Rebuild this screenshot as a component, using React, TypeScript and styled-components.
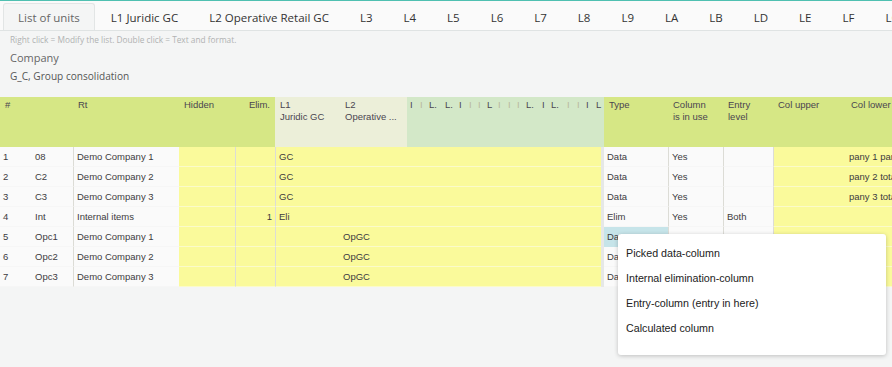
import React from "react";
import styled, { createGlobalStyle } from "styled-components";

const GlobalStyle = createGlobalStyle`
  html, body { margin: 0; padding: 0; }
  body {
    background: #f4f5f5;
    font-family: "Liberation Sans", Arial, sans-serif;
    overflow: hidden;
  }
`;

const Page = styled.div`
  position: relative;
  width: 892px;
  height: 367px;
  background: #f4f5f5;
  overflow: hidden;
`;

const TabBar = styled.div`
  display: flex;
  align-items: flex-end;
  gap: 1px;
  height: 29px;
  padding-left: 3px;
  background: #fafafa;
  border-top: 1px solid #4fc0b1;
  border-bottom: 1px solid #dfe3e3;
  white-space: nowrap;
  overflow: hidden;
`;

const Tab = styled.div<{ $active?: boolean }>`
  flex: none;
  height: 27px;
  line-height: 27px;
  padding: 0 14px;
  margin-bottom: -1px;
  font-family: "Open Sans", sans-serif;
  font-size: 11.5px;
  color: ${(p) => (p.$active ? "#666" : "#333")};
  background: ${(p) => (p.$active ? "#f4f5f5" : "transparent")};
  border: 1px solid ${(p) => (p.$active ? "#e2e5e5" : "transparent")};
  border-bottom: none;
  border-radius: 3px 3px 0 0;
  box-sizing: content-box;
`;

const Info = styled.div`
  padding: 0 10px 12px;
  font-family: "Open Sans", sans-serif;
`;

const Hint = styled.div`
  font-size: 8.3px;
  line-height: 18px;
  color: #b0b2b2;
`;

const Title = styled.div`
  font-size: 11px;
  line-height: 18px;
  color: #666;
`;

const Sub = styled.div`
  font-size: 10.1px;
  line-height: 18px;
  color: #555;
`;

const Grid = styled.div`
  display: grid;
  grid-template-columns: 32px 41px 106px 56px 40px 65px 67px 194px 3px 64px 55px 50px 73px 1fr;
  grid-template-rows: 50px;
  grid-auto-rows: 20px;
  font-size: 9.5px;
  color: #3d3a40;
`;

type HeadTone = "green" | "beige" | "mint";
const headBg: Record<HeadTone, string> = {
  green: "#d6e785",
  beige: "#ecefd9",
  mint: "#d3e8c8",
};

const Head = styled.div<{ $tone: HeadTone; $span?: number; $right?: boolean }>`
  grid-row: 1;
  grid-column: span ${(p) => p.$span ?? 1};
  height: 50px;
  box-sizing: border-box;
  padding: 2px ${(p) => (p.$right ? "5px" : "0")} 0 5px;
  line-height: 12px;
  background: ${(p) => headBg[p.$tone]};
  color: #4a4550;
  text-align: ${(p) => (p.$right ? "right" : "left")};
  white-space: nowrap;
  overflow: hidden;
`;

const HeadWrap = styled.div`
  display: contents;
`;

const NarrowHead = styled.div`
  grid-row: 1;
  grid-column: span 2;
  height: 50px;
  display: flex;
  background: #d3e8c8;
  padding-top: 2px;
  box-sizing: border-box;
  line-height: 12px;
`;

const NarrowLabel = styled.div<{ $faint?: boolean }>`
  flex: none;
  padding-left: 3px;
  box-sizing: border-box;
  overflow: hidden;
  white-space: nowrap;
  color: ${(p) => (p.$faint ? "#b9b89c" : "#4a4550")};
`;

type CellTone = "white" | "yellow" | "sep" | "sel";
const cellBg: Record<CellTone, string> = {
  white: "#fafafa",
  yellow: "#fafa9b",
  sep: "#e6e8e6",
  sel: "#c6e4e9",
};

const Cell = styled.div<{ $tone: CellTone; $line?: boolean; $right?: boolean }>`
  box-sizing: border-box;
  height: 20px;
  line-height: 20px;
  padding: 0 3px;
  background: ${(p) => cellBg[p.$tone]};
  border-left: ${(p) => (p.$line ? "1px solid #dcdcd6" : "none")};
  border-bottom: 1px solid
    ${(p) => (p.$tone === "yellow" ? "#fbfbc9" : p.$tone === "white" ? "#f6f6f6" : "transparent")};
  text-align: ${(p) => (p.$right ? "right" : "left")};
  white-space: nowrap;
  overflow: hidden;
`;

const Menu = styled.div`
  position: absolute;
  left: 618px;
  top: 234px;
  width: 268px;
  height: 121px;
  box-sizing: border-box;
  padding-top: 7px;
  background: #fff;
  border-radius: 3px;
  box-shadow: 0 1px 4px rgba(0, 0, 0, 0.22);
  z-index: 5;
`;

const MenuItem = styled.div`
  height: 25px;
  line-height: 25px;
  padding-left: 8px;
  font-size: 10.7px;
  color: #222;
  white-space: nowrap;
`;

const tabs = [
  "List of units",
  "L1 Juridic GC",
  "L2 Operative Retail GC",
  "L3",
  "L4",
  "L5",
  "L6",
  "L7",
  "L8",
  "L9",
  "LA",
  "LB",
  "LD",
  "LE",
  "LF",
  "LG",
];

const narrow: { t: string; w: number; faint?: boolean }[] = [
  { t: "I", w: 10 },
  { t: "I", w: 9, faint: true },
  { t: "L.", w: 16 },
  { t: "L.", w: 14 },
  { t: "I", w: 10 },
  { t: "I", w: 9, faint: true },
  { t: "I", w: 9, faint: true },
  { t: "L", w: 11 },
  { t: "I", w: 10, faint: true },
  { t: "I", w: 9, faint: true },
  { t: "I", w: 9, faint: true },
  { t: "L.", w: 16 },
  { t: "I", w: 9 },
  { t: "L.", w: 16 },
  { t: "I", w: 10, faint: true },
  { t: "I", w: 9, faint: true },
  { t: "I", w: 10 },
  { t: "L", w: 11 },
];

type Row = {
  n: string;
  code: string;
  name: string;
  elim: string;
  l1: string;
  l2: string;
  type: string;
  inUse: string;
  entry: string;
  lower: string;
  sel?: boolean;
};

const rows: Row[] = [
  { n: "1", code: "08", name: "Demo Company 1", elim: "", l1: "GC", l2: "", type: "Data", inUse: "Yes", entry: "", lower: "pany 1 parent" },
  { n: "2", code: "C2", name: "Demo Company 2", elim: "", l1: "GC", l2: "", type: "Data", inUse: "Yes", entry: "", lower: "pany 2 total" },
  { n: "3", code: "C3", name: "Demo Company 3", elim: "", l1: "GC", l2: "", type: "Data", inUse: "Yes", entry: "", lower: "pany 3 total" },
  { n: "4", code: "Int", name: "Internal items", elim: "1", l1: "Eli", l2: "", type: "Elim", inUse: "Yes", entry: "Both", lower: "" },
  { n: "5", code: "Opc1", name: "Demo Company 1", elim: "", l1: "", l2: "OpGC", type: "Data", inUse: "Yes", entry: "", lower: "", sel: true },
  { n: "6", code: "Opc2", name: "Demo Company 2", elim: "", l1: "", l2: "OpGC", type: "Data", inUse: "Yes", entry: "", lower: "" },
  { n: "7", code: "Opc3", name: "Demo Company 3", elim: "", l1: "", l2: "OpGC", type: "Data", inUse: "Yes", entry: "", lower: "" },
];

const menuItems = [
  "Picked data-column",
  "Internal elimination-column",
  "Entry-column (entry in here)",
  "Calculated column",
];

export default function App() {
  return (
    <Page>
      <GlobalStyle />
      <TabBar>
        {tabs.map((t, i) => (
          <Tab key={t} $active={i === 0}>
            {t}
          </Tab>
        ))}
      </TabBar>
      <Info>
        <Hint>Right click = Modify the list. Double click = Text and format.</Hint>
        <Title>Company</Title>
        <Sub>G_C, Group consolidation</Sub>
      </Info>
      <Grid>
        <HeadWrap>
          <Head $tone="green" $span={2}>#</Head>
          <Head $tone="green">Rt</Head>
          <Head $tone="green">Hidden</Head>
          <Head $tone="green" $right>Elim.</Head>
          <Head $tone="beige">
            L1
            <br />
            Juridic GC
          </Head>
          <Head $tone="beige">
            L2
            <br />
            Operative ...
          </Head>
          <NarrowHead>
            {narrow.map((c, i) => (
              <NarrowLabel key={i} $faint={c.faint} style={{ width: c.w }}>
                {c.t}
              </NarrowLabel>
            ))}
          </NarrowHead>
          <Head $tone="green">Type</Head>
          <Head $tone="green">
            Column
            <br />
            is in use
          </Head>
          <Head $tone="green">
            Entry
            <br />
            level
          </Head>
          <Head $tone="green">Col upper</Head>
          <Head $tone="green">Col lower</Head>
        </HeadWrap>
        {rows.map((r) => (
          <React.Fragment key={r.n}>
            <Cell $tone="white">{r.n}</Cell>
            <Cell $tone="white">{r.code}</Cell>
            <Cell $tone="white" $line>{r.name}</Cell>
            <Cell $tone="yellow" />
            <Cell $tone="yellow" $line $right>{r.elim}</Cell>
            <Cell $tone="yellow" $line>{r.l1}</Cell>
            <Cell $tone="yellow">{r.l2}</Cell>
            <Cell $tone="yellow" />
            <Cell $tone="sep" />
            <Cell $tone={r.sel ? "sel" : "white"}>{r.type}</Cell>
            <Cell $tone="white" $line>{r.inUse}</Cell>
            <Cell $tone="white" $line>{r.entry}</Cell>
            <Cell $tone="yellow" $line />
            <Cell $tone="yellow">{r.lower}</Cell>
          </React.Fragment>
        ))}
      </Grid>
      <Menu>
        {menuItems.map((m) => (
          <MenuItem key={m}>{m}</MenuItem>
        ))}
      </Menu>
    </Page>
  );
}
